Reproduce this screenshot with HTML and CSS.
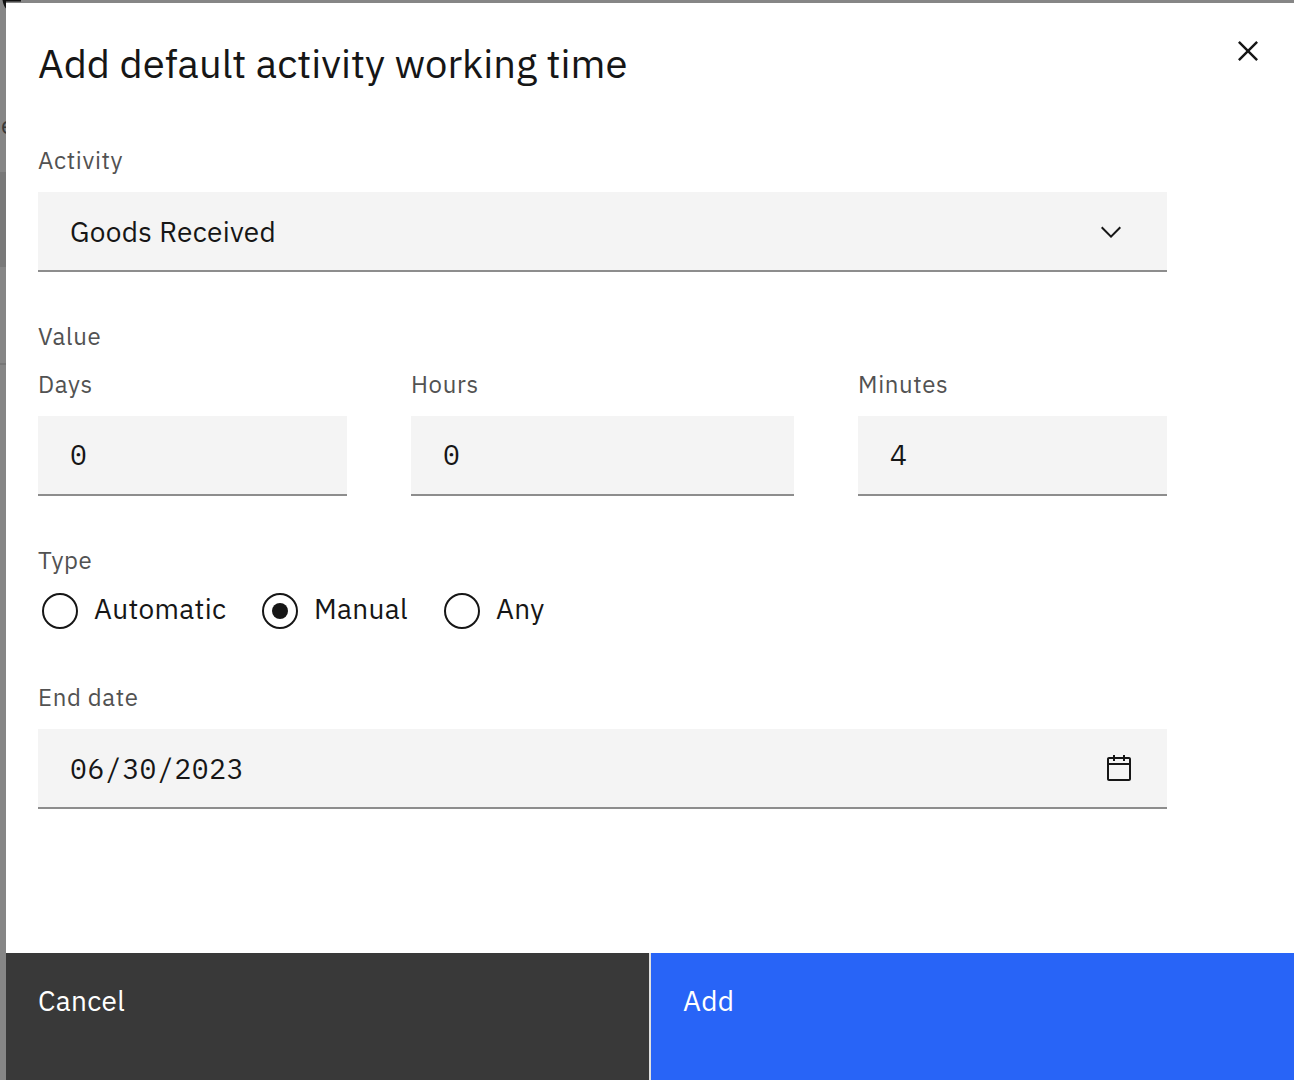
FILE: index.html
```html
<!DOCTYPE html>
<html lang="en">
<head>
<meta charset="utf-8">
<title>Add default activity working time</title>
<link rel="stylesheet" href="styles.css">
</head>
<body>
<div class="page-behind" aria-hidden="true">
  <svg class="glyph" width="24" height="10" viewBox="0 0 24 10"><path d="M2.500 0H21V1.500H6V8.500Q3.500 6 2.500 0Z" fill="#111"/></svg>
  <span class="letter">e</span>
  <div class="band"></div>
  <div class="rule"></div>
</div>
<form class="modal" role="dialog">
  <header class="head">
    <h1 class="title">Add default activity working time</h1>
    <button class="close" type="button" aria-label="Close">
      <svg width="40" height="40" viewBox="0 0 32 32"><path fill="#161616" d="M24 9.400 22.600 8 16 14.600 9.400 8 8 9.400 14.600 16 8 22.600 9.400 24 16 17.400 22.600 24 24 22.600 17.400 16z"/></svg>
    </button>
  </header>
  <main class="content">
    <section>
      <div class="label">Activity</div>
      <div class="field select"><span>Goods Received</span>
        <svg class="icon" width="32" height="32" viewBox="0 0 16 16"><path fill="#161616" d="M8 11 3 6 3.700 5.300 8 9.600 12.300 5.300 13 6z"/></svg>
      </div>
    </section>
    <section class="value">
      <div class="label">Value</div>
      <div class="columns">
        <div><div class="label">Days</div><div class="field number mono">0</div></div>
        <div><div class="label">Hours</div><div class="field number mono">0</div></div>
        <div><div class="label">Minutes</div><div class="field number mono">4</div></div>
      </div>
    </section>
    <section class="type">
      <div class="label">Type</div>
      <div class="radios">
        <label class="radio automatic"><i class="dot"></i>Automatic</label>
        <label class="radio manual"><i class="dot checked"></i>Manual</label>
        <label class="radio"><i class="dot"></i>Any</label>
      </div>
    </section>
    <section>
      <div class="label">End date</div>
      <div class="field mono"><span>06/30/2023</span>
        <svg class="icon" width="32" height="32" viewBox="0 0 32 32"><path fill="#161616" d="M26 4h-4V2h-2v2h-8V2h-2v2H6C4.900 4 4 4.900 4 6v20c0 1.100.9 2 2 2h20c1.100 0 2-.9 2-2V6c0-1.100-.9-2-2-2zm0 22H6V12h20V26zm0-16H6V6h4v2h2V6h8v2h2V6h4V10z"/></svg>
      </div>
    </section>
  </main>
  <footer class="actions">
    <button class="btn cancel" type="button">Cancel</button>
    <button class="btn add" type="button">Add</button>
  </footer>
</form>
</body>
</html>
```
FILE: styles.css
```css
* { box-sizing: border-box; }
body {
  margin: 0;
  height: 1080px;
  overflow: hidden;
  position: relative;
  padding: 3px 0 0 6px;
  background: #868686;
  color: #161616;
  font-family: "IBM Plex Sans", Roboto, sans-serif;
  font-size: 28px;
  letter-spacing: .32px;
}
button { border: 0; padding: 0; background: none; font: inherit; letter-spacing: inherit; color: inherit; text-align: left; }
.page-behind { position: absolute; inset: 0; }
.glyph { position: absolute; left: 0; top: 0; }
.letter { position: absolute; left: 1px; top: 109px; font-size: 24px; line-height: 32px; color: #393939; }
.band { position: absolute; top: 172px; width: 6px; height: 95px; background: #797979; }
.rule { position: absolute; top: 363px; width: 6px; height: 2px; background: #777; }
.modal { position: relative; height: 1077px; background: #fff; display: flex; flex-direction: column; }
.head { display: flex; justify-content: space-between; height: 141px; padding: 28px 26px 0 32px; }
.title { margin: 6px 0 0; font-size: 40px; font-weight: 400; line-height: 52px; letter-spacing: 0; }
.close { width: 40px; height: 40px; }
.close svg { display: block; }
.content { padding-left: 32px; width: 1161px; flex: 1; }
.label { height: 48px; line-height: 32px; font-size: 24px; letter-spacing: .64px; color: #525252; }
.field { display: flex; align-items: center; justify-content: space-between; height: 80px; padding: 0 32px; background: #f4f4f4; border-bottom: 2px solid #8d8d8d; }
.select { padding-right: 40px; }
.icon { margin-top: 2px; }
.mono { font-family: "IBM Plex Mono", "Liberation Mono", monospace; letter-spacing: .6px; }
.number { padding-bottom: 2px; }
.value { margin-top: 48px; }
.columns { display: grid; grid-template-columns: 309px 383px 309px; gap: 64px; }
.type { margin-top: 48px; height: 137px; }
.radios { display: flex; padding-left: 4px; height: 36px; margin-top: 1px; }
.radio { display: flex; gap: 16px; line-height: 32px; }
.automatic { width: 220px; }
.manual { width: 182px; }
.dot { flex: none; width: 36px; height: 36px; border: 2px solid #161616; border-radius: 50%; display: grid; place-items: center; }
.checked::before { content: ""; width: 16px; height: 16px; border-radius: 50%; background: #161616; }
.actions { display: flex; gap: 2px; height: 127px; background: #e0e0e0; }
.btn { flex: 1; padding: 0 32px 32px; color: #fff; }
.cancel { background: #393939; }
.add { background: #2864f7; }
```
